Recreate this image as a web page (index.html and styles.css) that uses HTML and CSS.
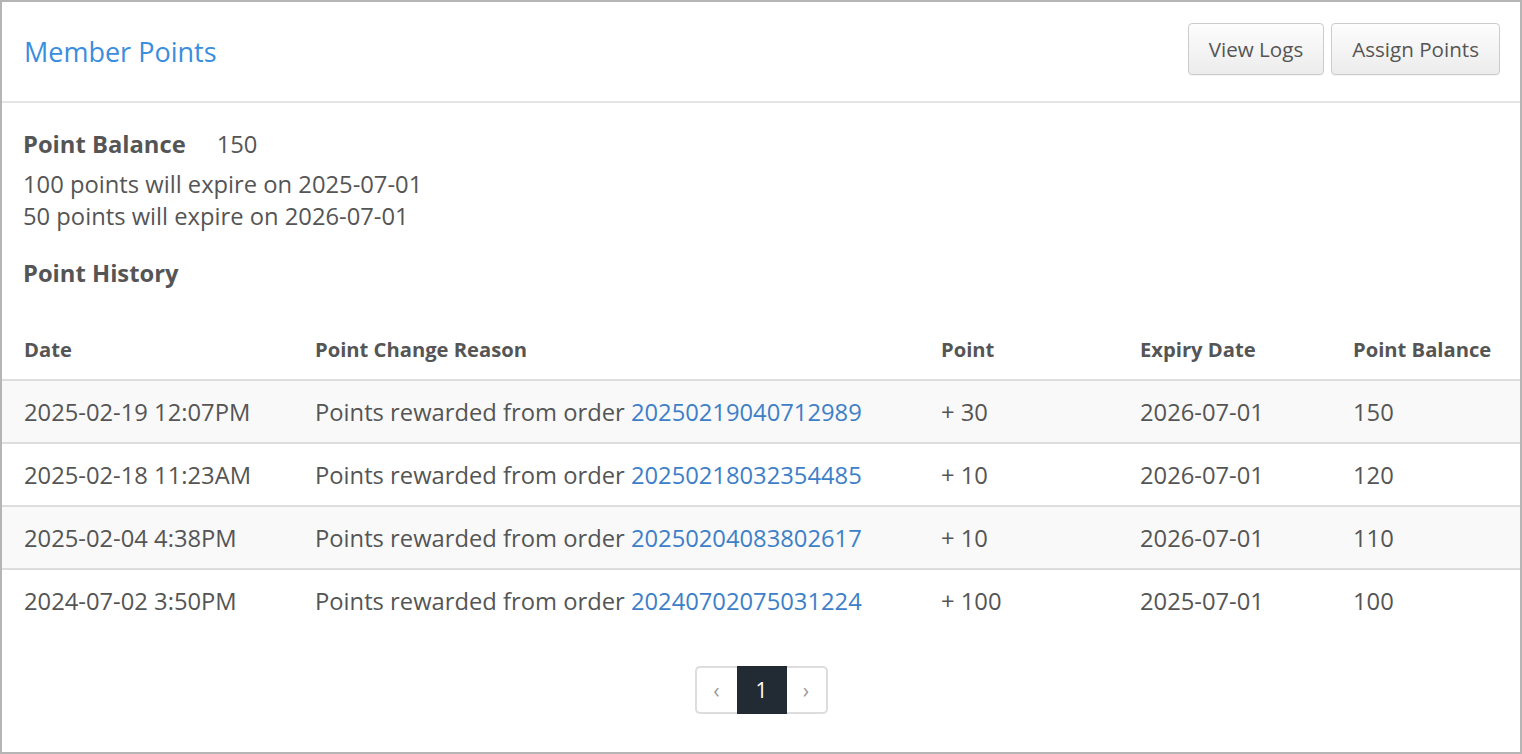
FILE: index.html
```html
<!DOCTYPE html>
<html>
<head>
<meta charset="utf-8">
<link rel="stylesheet" href="styles.css">
</head>
<body>
<div class="panel">
  <div class="panel-heading">
    <h1 class="title">Member Points</h1>
    <div class="actions">
      <button class="btn">View Logs</button>
      <button class="btn">Assign Points</button>
    </div>
  </div>
  <div class="panel-body">
    <div class="balance"><span class="label">Point Balance</span><span>150</span></div>
    <div class="expiry">
      <div>100 points will expire on 2025-07-01</div>
      <div>50 points will expire on 2026-07-01</div>
    </div>
    <h2 class="history">Point History</h2>
  </div>
  <table class="table">
    <colgroup>
      <col class="c1"><col class="c2"><col class="c3"><col class="c4"><col class="c5">
    </colgroup>
    <thead>
      <tr><th>Date</th><th>Point Change Reason</th><th>Point</th><th>Expiry Date</th><th>Point Balance</th></tr>
    </thead>
    <tbody>
      <tr class="odd"><td>2025-02-19 12:07PM</td><td>Points rewarded from order <a href="#">20250219040712989</a></td><td>+ 30</td><td>2026-07-01</td><td>150</td></tr>
      <tr><td>2025-02-18 11:23AM</td><td>Points rewarded from order <a href="#">20250218032354485</a></td><td>+ 10</td><td>2026-07-01</td><td>120</td></tr>
      <tr class="odd"><td>2025-02-04 4:38PM</td><td>Points rewarded from order <a href="#">20250204083802617</a></td><td>+ 10</td><td>2026-07-01</td><td>110</td></tr>
      <tr><td>2024-07-02 3:50PM</td><td>Points rewarded from order <a href="#">20240702075031224</a></td><td>+ 100</td><td>2025-07-01</td><td>100</td></tr>
    </tbody>
  </table>
  <div class="pager">
    <ul class="pagination">
      <li class="pg prev">&lsaquo;</li>
      <li class="pg active">1</li>
      <li class="pg next">&rsaquo;</li>
    </ul>
  </div>
</div>
</body>
</html>
```
FILE: styles.css
```css
* { box-sizing: border-box; }
html, body { margin: 0; padding: 0; background: #fff; }
body {
  font-family: "Open Sans", "Liberation Sans", sans-serif;
  color: #555;
  font-size: 23.75px;
}
.panel {
  width: 1522px;
  height: 754px;
  border: 2px solid #b5b5b5;
  overflow: hidden;
  background: #fff;
}
.panel-heading {
  height: 101px;
  border-bottom: 2px solid #e5e5e5;
  display: flex;
  align-items: center;
  justify-content: space-between;
  padding: 0 20px 0 22px;
}
.title {
  margin: 0;
  font-size: 27px;
  font-weight: 400;
  color: #3b8ddd;
  line-height: 36px;
}
.actions {
  display: flex;
  gap: 7px;
  align-self: flex-start;
  margin-top: 21px;
}
.btn {
  font-family: inherit;
  font-size: 20.6px;
  line-height: 30px;
  padding: 10px 20px;
  color: #555;
  border: 1px solid #ccc;
  border-radius: 4px;
  background: linear-gradient(#fdfdfd, #ececec);
  box-shadow: inset 0 1px 0 rgba(255,255,255,.15), 0 1px 1px rgba(0,0,0,.05);
}
.panel-body {
  padding: 24px 22px 0 21px;
}
.balance {
  display: flex;
  gap: 31px;
  line-height: 34px;
}
.label { font-weight: 700; }
.expiry {
  margin-top: 7px;
  line-height: 32px;
}
.history {
  margin: 24px 0 0;
  font-size: 23.75px;
  font-weight: 700;
  line-height: 34px;
}
.table {
  width: 100%;
  margin-top: 28px;
  border-collapse: collapse;
  table-layout: fixed;
}
.c1 { width: 300px; }
.c2 { width: 626px; }
.c3 { width: 199px; }
.c4 { width: 213px; }
.c5 { width: 180px; }
.table th, .table td {
  text-align: left;
  padding: 13.5px 0 13.5px 13px;
  line-height: 34px;
  white-space: nowrap;
}
.table th:first-child, .table td:first-child { padding-left: 22px; }
.table th {
  font-size: 20.2px;
  font-weight: 700;
  border-bottom: 2px solid #ddd;
}
.table td { border-top: 2px solid #ddd; }
.table tbody tr:first-child td { border-top: 0; }
.table tr.odd td { background: #f9f9f9; }
.table a { color: #3d80c8; text-decoration: none; }
.pager {
  display: flex;
  justify-content: center;
  margin-top: 35px;
}
.pagination {
  display: flex;
  list-style: none;
  margin: 0;
  padding: 0;
}
.pg {
  height: 48px;
  display: flex;
  align-items: center;
  justify-content: center;
  border: 2px solid #ddd;
  font-size: 21px;
  color: #999;
}
.prev { width: 42px; border-right: 0; border-radius: 5px 0 0 5px; }
.next { width: 41px; border-left: 0; border-radius: 0 5px 5px 0; }
.active { width: 50px; background: #222a33; border-color: #222a33; color: #fff; }
```
